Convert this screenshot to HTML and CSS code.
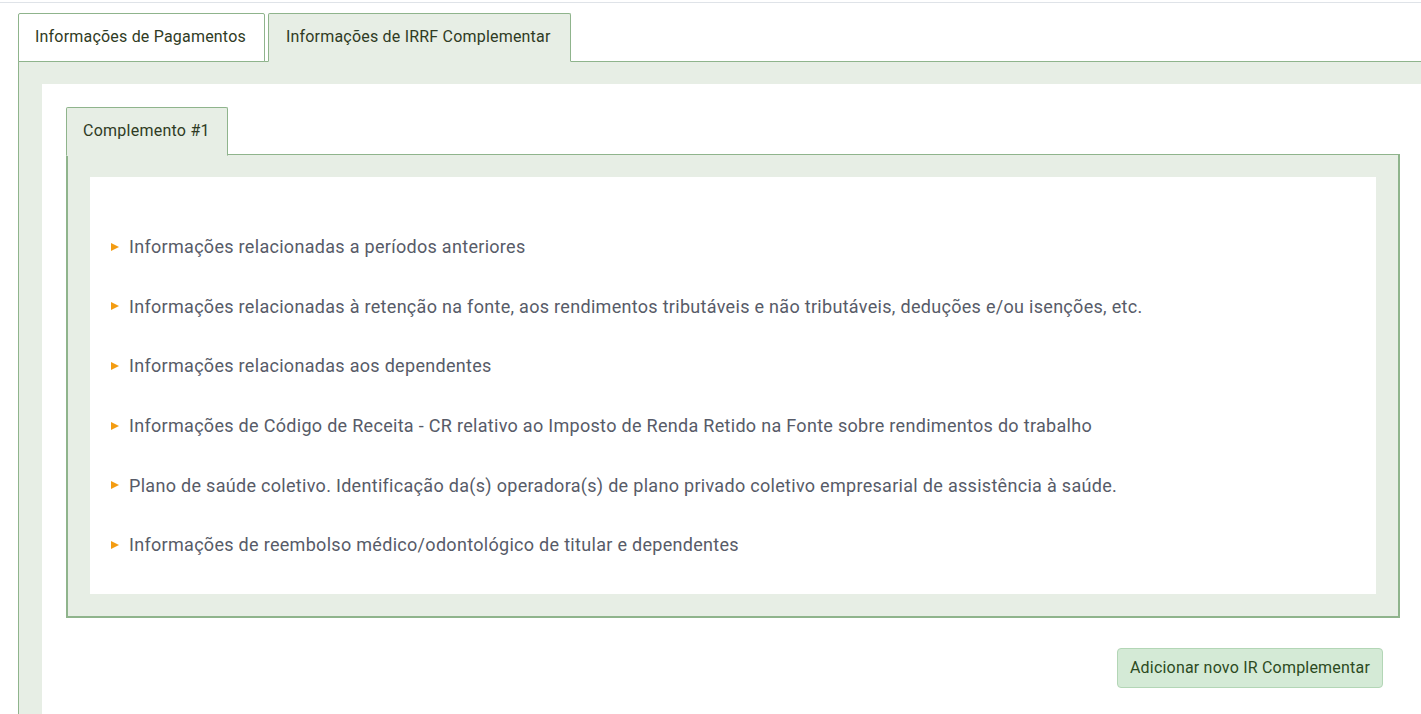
FILE: index.html
```html
<!DOCTYPE html>
<html lang="pt-BR">
<head>
<meta charset="utf-8">
<title>IRRF Complementar</title>
<link rel="stylesheet" href="styles.css">
</head>
<body>
<div class="topbar"></div>
<div class="page">
  <div class="tabs">
    <div class="tab">Informações de Pagamentos</div>
    <div class="tab active">Informações de IRRF Complementar</div>
  </div>
  <div class="outer-panel">
    <div class="outer-content">
      <div class="tabs inner-tabs">
        <div class="tab small active">Complemento #1</div>
      </div>
      <div class="inner-panel">
        <div class="inner-content">
          <ul class="items">
            <li><span class="arrow"></span>Informações relacionadas a períodos anteriores</li>
            <li><span class="arrow"></span>Informações relacionadas à retenção na fonte, aos rendimentos tributáveis e não tributáveis, deduções e/ou isenções, etc.</li>
            <li><span class="arrow"></span>Informações relacionadas aos dependentes</li>
            <li><span class="arrow"></span>Informações de Código de Receita - CR relativo ao Imposto de Renda Retido na Fonte sobre rendimentos do trabalho</li>
            <li><span class="arrow"></span>Plano de saúde coletivo. Identificação da(s) operadora(s) de plano privado coletivo empresarial de assistência à saúde.</li>
            <li><span class="arrow"></span>Informações de reembolso médico/odontológico de titular e dependentes</li>
          </ul>
        </div>
      </div>
      <div class="actions">
        <button class="btn">Adicionar novo IR Complementar</button>
      </div>
    </div>
  </div>
</div>
</body>
</html>
```

FILE: styles.css
```css
html, body {
  margin: 0;
  padding: 0;
  height: 100%;
  overflow: hidden;
  background: #ffffff;
  font-family: Roboto, "Liberation Sans", Arial, sans-serif;
}
.topbar {
  height: 2px;
  border-bottom: 1px solid #dfe3e8;
}
.page {
  padding: 10px 0 0 18px;
}
.tabs {
  display: flex;
  gap: 3px;
  border-bottom: 1px solid #8fb48c;
}
.tab {
  box-sizing: border-box;
  height: 49px;
  display: flex;
  align-items: center;
  padding: 0 18px 2px 16px;
  border: 1px solid #8fb48c;
  border-radius: 2px 2px 0 0;
  background: #ffffff;
  color: #2f3b24;
  font-size: 16px;
  letter-spacing: 0.2px;
  margin-bottom: -1px;
}
.tab.active {
  background: #e7eee5;
  border-bottom-color: #e7eee5;
  padding: 0 19px 2px 17px;
}
.outer-panel {
  background: #e7eee5;
  border-left: 1px solid #8fb48c;
  padding: 22px 0 0 23px;
  height: 700px;
}
.outer-content {
  background: #ffffff;
  height: 100%;
  padding: 23px 21px 0 24px;
}
.inner-tabs {
  border-bottom: none;
}
.tab.small {
  font-size: 16px;
  letter-spacing: 0.25px;
  height: 49px;
  padding: 0 17px 2px 16px;
  border-bottom: 1px solid #e7eee5;
}
.inner-panel {
  background: #e7eee5;
  border: 1px solid #8fb48c;
  border-width: 1px 2px 2px 2px;
  padding: 22px;
  margin-top: -1px;
}
.inner-content {
  background: #ffffff;
  padding: 40px 0 19px 21px;
}
.items {
  list-style: none;
  margin: 0;
  padding: 0;
}
.items li {
  display: flex;
  align-items: center;
  height: 59.6px;
  font-size: 18px;
  letter-spacing: 0.3px;
  color: #575b68;
}
.arrow {
  width: 0;
  height: 0;
  border-left: 8px solid #f39c12;
  border-top: 4.5px solid transparent;
  border-bottom: 4.5px solid transparent;
  margin-right: 10px;
}
.actions {
  display: flex;
  justify-content: flex-end;
  padding: 30px 17px 0 0;
}
.btn {
  font-family: Roboto, "Liberation Sans", Arial, sans-serif;
  font-size: 16px;
  letter-spacing: 0.2px;
  color: #2c4a22;
  background: #d4ead6;
  border: 1px solid #b3d6b6;
  border-radius: 4px;
  height: 40px;
  padding: 0 12px;
}
```
